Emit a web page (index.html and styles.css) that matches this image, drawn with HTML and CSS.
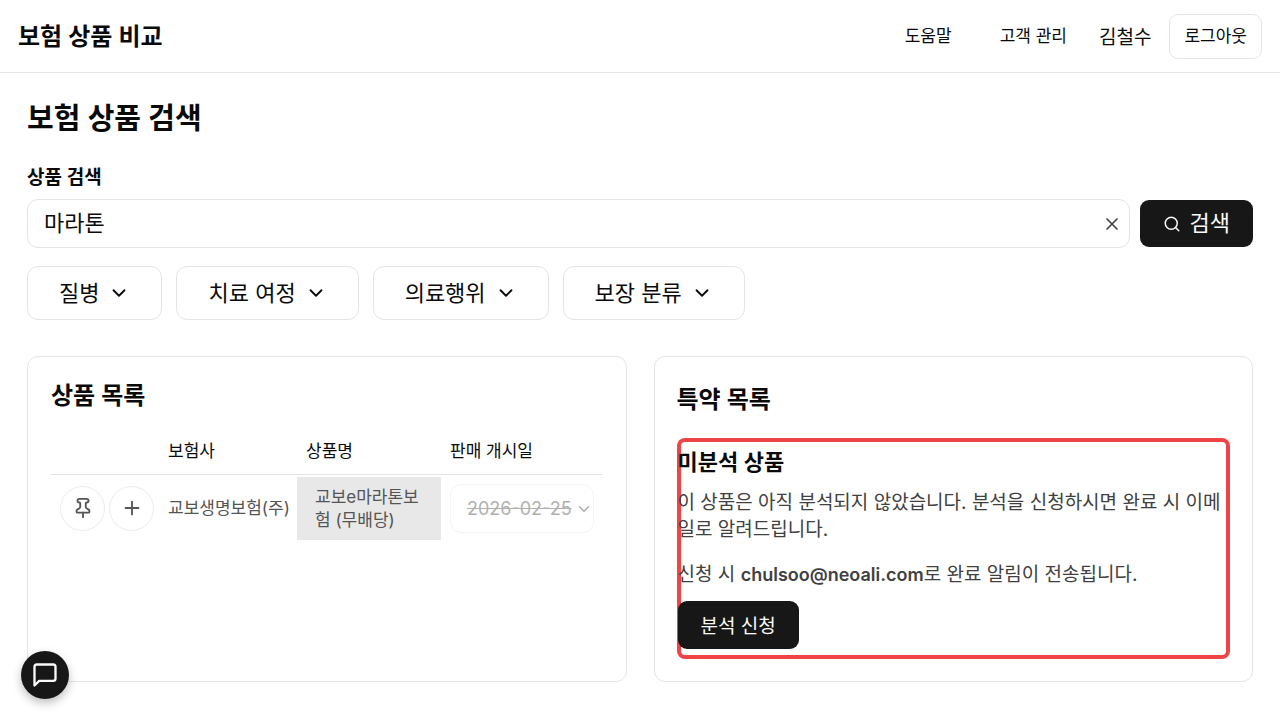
FILE: index.html
```html
<!DOCTYPE html>
<html lang="ko">
<head>
<meta charset="utf-8">
<meta name="viewport" content="width=device-width, initial-scale=1">
<title>보험 상품 비교</title>
<link rel="stylesheet" href="styles.css">
</head>
<body>
<header class="topbar">
  <a class="brand" href="#">보험 상품 비교</a>
  <nav class="topnav">
    <a class="nav-link" href="#">도움말</a>
    <a class="nav-link" href="#">고객 관리</a>
    <span class="user">김철수</span>
    <button class="logout" type="button">로그아웃</button>
  </nav>
</header>
<main class="page">
  <h1 class="page-title">보험 상품 검색</h1>
  <form class="search">
    <label class="search-label" for="q">상품 검색</label>
    <div class="search-row">
      <div class="search-field">
        <input class="search-input" id="q" type="text" value="마라톤">
        <button class="clear" type="button" aria-label="지우기">
          <svg class="icon icon-clear" viewBox="0 0 24 24"><path d="M18 6 6 18M6 6l12 12"/></svg>
        </button>
      </div>
      <button class="search-button" type="button">
        <svg class="icon icon-sm" viewBox="0 0 24 24"><circle cx="11" cy="11" r="8"/><path d="m21 21-4.3-4.3"/></svg>
        검색
      </button>
    </div>
  </form>
  <div class="filters">
    <button class="filter" type="button">질병<svg class="icon icon-md" viewBox="0 0 24 24"><path d="m6 9 6 6 6-6"/></svg></button>
    <button class="filter" type="button">치료 여정<svg class="icon icon-md" viewBox="0 0 24 24"><path d="m6 9 6 6 6-6"/></svg></button>
    <button class="filter" type="button">의료행위<svg class="icon icon-md" viewBox="0 0 24 24"><path d="m6 9 6 6 6-6"/></svg></button>
    <button class="filter" type="button">보장 분류<svg class="icon icon-md" viewBox="0 0 24 24"><path d="m6 9 6 6 6-6"/></svg></button>
  </div>
  <div class="panels">
    <section class="card card-products">
      <h2 class="card-title">상품 목록</h2>
      <table class="products">
        <colgroup><col class="col-actions"><col class="col-company"><col class="col-name"><col></colgroup>
        <thead>
          <tr><th></th><th>보험사</th><th>상품명</th><th>판매 개시일</th></tr>
        </thead>
        <tbody>
          <tr>
            <td>
              <div class="actions">
                <button class="round" type="button" aria-label="고정"><svg class="icon icon-md" viewBox="0 0 24 24"><path d="M12 17v5"/><path d="M9 10.76a2 2 0 0 1-1.11 1.79l-1.78.9A2 2 0 0 0 5 15.24V16a1 1 0 0 0 1 1h12a1 1 0 0 0 1-1v-.76a2 2 0 0 0-1.11-1.79l-1.78-.9A2 2 0 0 1 15 10.76V7a1 1 0 0 1 1-1 2 2 0 0 0 0-4H8a2 2 0 0 0 0 4 1 1 0 0 1 1 1z"/></svg></button>
                <button class="round" type="button" aria-label="추가"><svg class="icon icon-md" viewBox="0 0 24 24"><path d="M5 12h14M12 5v14"/></svg></button>
              </div>
            </td>
            <td class="company">교보생명보험(주)</td>
            <td><button class="product" type="button">교보e마라톤보험 (무배당)</button></td>
            <td class="date-cell">
              <div class="date-field">
                <select class="date" aria-label="판매 개시일" disabled><option>2026-02-25</option></select>
                <svg class="icon icon-sm date-arrow" viewBox="0 0 24 24"><path d="m6 9 6 6 6-6"/></svg>
              </div>
            </td>
          </tr>
        </tbody>
      </table>
    </section>
    <section class="card">
      <h2 class="card-title card-title-tall">특약 목록</h2>
      <div class="notice">
        <h3 class="notice-title">미분석 상품</h3>
        <p class="notice-text">이 상품은 아직 분석되지 않았습니다. 분석을 신청하시면 완료 시 이메일로 알려드립니다.</p>
        <p class="notice-text">신청 시 <strong class="email">chulsoo@neoali.com</strong>로 완료 알림이 전송됩니다.</p>
        <button class="request" type="button">분석 신청</button>
      </div>
    </section>
  </div>
</main>
<button class="chat" type="button" aria-label="채팅">
  <svg class="icon icon-lg" viewBox="0 0 24 24"><path d="M21 15a2 2 0 0 1-2 2H7l-4 4V5a2 2 0 0 1 2-2h14a2 2 0 0 1 2 2z"/></svg>
</button>
</body>
</html>
```
FILE: styles.css
```css
* { box-sizing: border-box; }
body, h1, h2, h3, p { margin: 0; }
body {
  background: #fff;
  color: #0a0a0a;
  font-family: Inter, "Noto Sans CJK KR", sans-serif;
  font-size: 17px;
  line-height: 23px;
}
button, input, select { font: inherit; color: inherit; margin: 0; }
button { cursor: pointer; }
.icon { fill: none; stroke: currentColor; stroke-width: 2; stroke-linecap: round; stroke-linejoin: round; flex: none; }
.icon-sm { width: 18px; height: 18px; }
.icon-clear { width: 20px; height: 20px; }
.icon-md { width: 22px; height: 22px; }
.icon-lg { width: 28px; height: 28px; }

.topbar {
  display: flex;
  align-items: center;
  justify-content: space-between;
  padding: 14px 18px 13px;
  border-bottom: 1px solid #e5e5e5;
}
.brand { color: inherit; text-decoration: none; font-size: 24px; font-weight: 600; line-height: 32px; }
.topnav { display: flex; align-items: center; }
.nav-link { color: inherit; text-decoration: none; margin-right: 48px; }
.user { font-size: 19px; line-height: 24px; padding-top: 2px; margin: 0 18px 0 -16px; }
.logout { height: 45px; padding: 0 14px; background: #fff; border: 1px solid #e5e5e5; border-radius: 9px; }

.page { padding: 28px 27px 27px; }
.page-title { font-size: 29px; font-weight: 600; line-height: 36px; margin-bottom: 29px; }
.search { margin-bottom: 18px; }
.search-label { display: block; font-size: 19px; font-weight: 600; line-height: 24px; margin-bottom: 9px; }
.search-row { display: flex; align-items: center; gap: 10px; }
.search-field { position: relative; flex: 1; display: flex; }
.search-input { width: 100%; height: 49px; padding: 0 48px 5px 16px; border: 1px solid #e5e5e5; border-radius: 11px; background: #fff; font-size: 22px; }
.clear { position: absolute; top: 0; right: 0; bottom: 0; width: 36px; padding: 0; border: 0; background: none; color: #404040; display: flex; align-items: center; justify-content: center; }
.search-button { display: flex; align-items: center; gap: 9px; height: 47px; padding: 0 23px; border: 0; border-radius: 9px; background: #171717; color: #fafafa; font-size: 22px; }

.filters { display: flex; flex-wrap: wrap; gap: 14px; margin-bottom: 36px; }
.filter { display: flex; align-items: center; gap: 9px; height: 54px; padding: 0 31px; border: 1px solid #e5e5e5; border-radius: 11px; background: #fff; font-size: 22px; }

.panels { display: grid; grid-template-columns: 1fr 1fr; gap: 27px; }
.card { border: 1px solid #e5e5e5; border-radius: 11px; padding: 23px 22px 22px; }
.card-products { padding: 23px; }
.card-title { font-size: 24px; font-weight: 600; line-height: 32px; margin-bottom: 16px; }
.card-title-tall { line-height: 40px; margin-bottom: 18px; }

.products { width: 100%; table-layout: fixed; border-collapse: collapse; }
.col-actions { width: 108px; }
.col-company { width: 138px; }
.col-name { width: 144px; }
.products th { height: 46px; padding: 2px 9px 0; border-bottom: 1px solid #e5e5e5; text-align: left; font-weight: 400; }
.products td { padding: 2px 0; color: #545454; }
.products .company { padding: 0 9px; white-space: nowrap; }
.products .date-cell { padding: 0 9px; }
.actions { display: flex; gap: 4px; padding-left: 9px; }
.round { display: flex; align-items: center; justify-content: center; width: 45px; height: 45px; padding: 0; border: 1px solid #ececec; border-radius: 50%; background: #fff; }
.product { display: block; width: 100%; padding: 9px 18px 8px; border: 0; background: #e8e8e8; text-align: left; }
.date-field { position: relative; }
.date { appearance: none; width: 100%; height: 49px; padding: 0 16px; border: 1px solid #f4f4f4; border-radius: 11px; background: #fff; color: #b0b0b0; opacity: 1; font-size: 18px; text-decoration: line-through; }
.date-arrow { position: absolute; right: 1px; top: 16px; color: #b0b0b0; }

.notice { padding: 10px 1px; border-radius: 8px; box-shadow: inset 0 0 0 4px #ef4444; }
.notice-title { font-size: 22px; font-weight: 600; line-height: 28px; margin-bottom: 13px; }
.notice-text { font-size: 19px; line-height: 27px; margin-bottom: 18px; color: #404040; }
.notice-text + .request { margin-top: -5px; }
.email { font-size: 18px; font-weight: 600; }
.request { display: block; height: 48px; padding: 2px 23px 0; border: 0; border-radius: 9px; background: #171717; color: #fafafa; font-size: 19px; }

.chat { position: fixed; left: 21px; bottom: 21px; display: flex; align-items: center; justify-content: center; width: 48px; height: 48px; padding: 0; border: 0; border-radius: 50%; background: #171717; color: #fafafa; box-shadow: 0 4px 10px rgba(0, 0, 0, 0.25); }
```
